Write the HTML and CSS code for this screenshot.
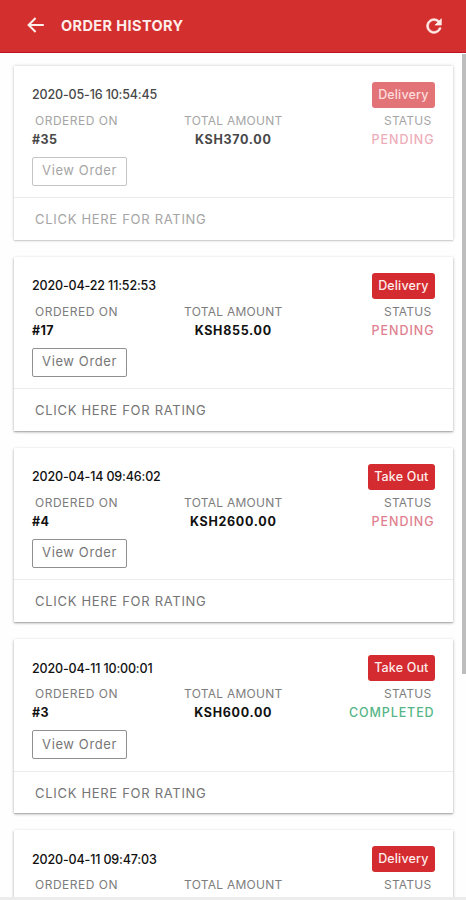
FILE: index.html
```
<!DOCTYPE html>
<html lang="en">

<head>
    <meta charset="utf-8">
    <title>Order History</title>
    <link rel="stylesheet" href="styles.css">
</head>

<body>
    <header class="topbar">
        <svg class="icon-back" viewBox="0 0 18 18">
            <path d="M16.8 9H2M8.6 2L1.6 9L8.6 16" />
        </svg>
        <h1>ORDER HISTORY</h1>
        <svg class="icon-refresh" viewBox="0 0 24 24">
            <path d="M17.65 6.35C16.2 4.9 14.21 4 12 4c-4.42 0-7.99 3.58-7.99 8s3.57 8 7.99 8c3.73 0 6.84-2.55 7.73-6h-2.08c-.82 2.33-3.04 4-5.65 4-3.31 0-6-2.69-6-6s2.69-6 6-6c1.66 0 3.14.69 4.22 1.78L13 11h7V4l-2.35 2.35z" />
        </svg>
    </header>

    <main class="orders">
        <div class="card faded">
            <div class="card-body">
                <div class="card-head"><span class="date">2020-05-16 10:54:45</span><span class="badge">Delivery</span></div>
                <div class="labels"><span>ORDERED ON</span><span>TOTAL AMOUNT</span><span>STATUS</span></div>
                <div class="values"><b>#35</b><b>KSH370.00</b><span class="pending">PENDING</span></div>
                <button>View Order</button>
            </div>
            <div class="rating">CLICK HERE FOR RATING</div>
        </div>

        <div class="card">
            <div class="card-body">
                <div class="card-head"><span class="date">2020-04-22 11:52:53</span><span class="badge">Delivery</span></div>
                <div class="labels"><span>ORDERED ON</span><span>TOTAL AMOUNT</span><span>STATUS</span></div>
                <div class="values"><b>#17</b><b>KSH855.00</b><span class="pending">PENDING</span></div>
                <button>View Order</button>
            </div>
            <div class="rating">CLICK HERE FOR RATING</div>
        </div>

        <div class="card">
            <div class="card-body">
                <div class="card-head"><span class="date">2020-04-14 09:46:02</span><span class="badge">Take Out</span></div>
                <div class="labels"><span>ORDERED ON</span><span>TOTAL AMOUNT</span><span>STATUS</span></div>
                <div class="values"><b>#4</b><b>KSH2600.00</b><span class="pending">PENDING</span></div>
                <button>View Order</button>
            </div>
            <div class="rating">CLICK HERE FOR RATING</div>
        </div>

        <div class="card">
            <div class="card-body">
                <div class="card-head"><span class="date">2020-04-11 10:00:01</span><span class="badge">Take Out</span></div>
                <div class="labels"><span>ORDERED ON</span><span>TOTAL AMOUNT</span><span>STATUS</span></div>
                <div class="values"><b>#3</b><b>KSH600.00</b><span class="completed">COMPLETED</span></div>
                <button>View Order</button>
            </div>
            <div class="rating">CLICK HERE FOR RATING</div>
        </div>

        <div class="card last">
            <div class="card-head"><span class="date">2020-04-11 09:47:03</span><span class="badge">Delivery</span></div>
            <div class="labels"><span>ORDERED ON</span><span>TOTAL AMOUNT</span><span>STATUS</span></div>
        </div>
    </main>

    <div class="scrollbar"></div>
    <div class="bottom-edge"></div>
</body>

</html>
```
FILE: styles.css
```
* {
    box-sizing: border-box;
}

body {
    margin: 0;
    height: 900px;
    overflow: hidden;
    background: #fefefe;
    font-family: Inter, "Open Sans", sans-serif;
}

.topbar {
    display: flex;
    align-items: center;
    height: 53px;
    padding: 0 21px 2px 27px;
    background: #d32f2f;
    border-bottom: 1px solid #bb1226;
}

.topbar h1 {
    flex: 1;
    margin: 1px 0 0 16px;
    color: #ffeeea;
    font-size: 14.5px;
    font-weight: 700;
    letter-spacing: 0.4px;
}

.icon-back {
    width: 18px;
    height: 18px;
    fill: none;
    stroke: #ffeeea;
    stroke-width: 2;
}

.icon-refresh {
    width: 22px;
    height: 22px;
    margin-top: 1px;
    fill: #ffeeea;
    stroke: #ffeeea;
    stroke-width: 0.7;
}

.orders {
    display: flex;
    flex-direction: column;
    gap: 17.2px;
    height: 847px;
    padding: 12.5px 13.5px 0 14px;
    overflow: hidden;
}

.card {
    flex: none;
    height: 174px;
    background: #fff;
    box-shadow: 0 1px 3px rgba(0, 0, 0, 0.28), 0 1px 1px rgba(0, 0, 0, 0.14);
}

.card-body {
    height: 132.5px;
    padding: 16px 18px 0;
    border-bottom: 1px solid #ececec;
}

/* the last one runs on under the bottom of the screen */
.card.last {
    height: 70px;
    padding: 16px 18px 0;
}

.card-head {
    display: flex;
    justify-content: space-between;
    align-items: center;
    height: 26px;
    margin-bottom: 3px;
}

.date {
    color: #111;
    font-size: 12.5px;
    font-weight: 500;
    letter-spacing: -0.15px;
}

.badge {
    height: 26px;
    padding: 0 6px;
    border-radius: 3px;
    background: #d32b2f;
    color: #ffeceb;
    font-size: 12.5px;
    font-weight: 500;
    letter-spacing: 0.15px;
    line-height: 25px;
}

.labels,
.values {
    display: grid;
    grid-template-columns: 1fr 1fr 1fr;
    height: 19px;
    line-height: 19px;
    text-align: center;
    white-space: nowrap;
}

.labels {
    padding: 0 3px;
    color: #7d7d7d;
    font-size: 12px;
    letter-spacing: 0.25px;
    line-height: 20px;
}

.labels :first-child {
    letter-spacing: 0.5px;
}

.values {
    color: #111;
    font-size: 12.5px;
    letter-spacing: 0.7px;
    line-height: 20px;
}

.labels :first-child,
.values :first-child {
    text-align: left;
}

.values :first-child {
    letter-spacing: 0.4px;
}

.labels :last-child,
.values :last-child {
    text-align: right;
}

.values .pending {
    color: #e0808f;
    font-weight: 500;
    letter-spacing: 0.95px;
}

.values .completed {
    color: #55b587;
    font-weight: 500;
    letter-spacing: 0.9px;
}

button {
    display: block;
    width: 95px;
    height: 29px;
    margin-top: 8px;
    padding: 0 0 2px;
    border: 1px solid #909090;
    border-radius: 2px;
    background: #fff;
    color: #777;
    font-family: inherit;
    font-size: 13px;
    letter-spacing: 0.6px;
}

.rating {
    padding-left: 21px;
    color: #757575;
    font-size: 13px;
    letter-spacing: 0.7px;
    line-height: 42px;
}

.faded {
    box-shadow: 0 0 3px rgba(0, 0, 0, 0.22), 0 1px 1px rgba(0, 0, 0, 0.1);
}

.faded .date,
.faded .values b {
    color: #484848;
}

.faded .badge {
    background: #e27478;
    color: #ffdcdc;
}

.faded .labels,
.faded .rating,
.faded button {
    color: #a5a5a5;
}

.faded button {
    border-color: #c4c4c4;
}

.faded .pending {
    color: #eeadb9;
}

/* overlays on the edge of the scrolling list */
.scrollbar {
    position: absolute;
    top: 54px;
    right: 0;
    width: 4px;
    height: 620px;
    background: #bdbdbd;
}

.bottom-edge {
    position: absolute;
    left: 0;
    right: 0;
    top: 897px;
    height: 3px;
    background: #ececec;
}
```
